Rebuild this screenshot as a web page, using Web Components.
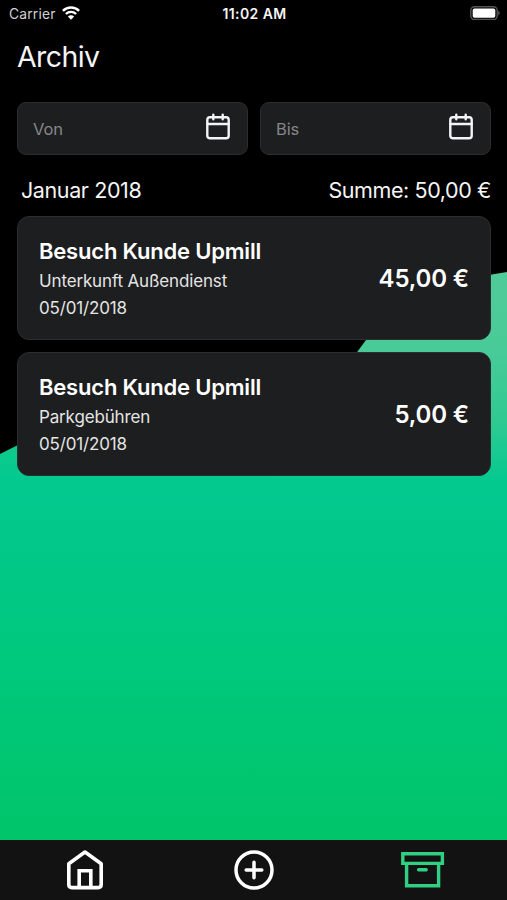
<!DOCTYPE html>
<html lang="de">
<head>
<meta charset="utf-8">
<title>Archiv</title>
<style>
    html, body { margin: 0; height: 100%; background: #000; }
    body { font-family: Inter, "Liberation Sans", sans-serif; color: #f5f5f5; overflow: hidden; }
</style>
</head>
<body>

<archive-app>
    <status-bar slot="status" carrier="Carrier" time="11:02 AM"></status-bar>
    <span slot="title">Archiv</span>
    <date-field slot="filter">Von</date-field>
    <date-field slot="filter">Bis</date-field>
    <month-group month="Januar 2018" total="Summe: 50,00 €">
        <expense-card amount="45,00 €">
            Besuch Kunde Upmill
            <span slot="kind">Unterkunft Außendienst</span>
            <span slot="date">05/01/2018</span>
        </expense-card>
        <expense-card amount="5,00 €">
            Besuch Kunde Upmill
            <span slot="kind">Parkgebühren</span>
            <span slot="date">05/01/2018</span>
        </expense-card>
    </month-group>
    <tab-bar slot="tabs"></tab-bar>
</archive-app>

<script>
/** Create an open shadow root on the element and fill it from an HTML string */
function attach(el, html) {
    const template = document.createElement('template')
    template.innerHTML = html
    el.attachShadow({ mode: 'open' }).append(template.content.cloneNode(true))
}

class ArchiveApp extends HTMLElement {
    constructor() {
        super()
        attach(this, `
            <style>
                :host { display: flex; flex-direction: column; height: 100vh; position: relative; isolation: isolate; }
                .backdrop { position: absolute; inset: 0; width: 100%; height: 100%; z-index: -1; }
                h1 { margin: 0; padding: 10px 17px 0; font-size: 28.5px; line-height: 40px; font-weight: 400; letter-spacing: -0.6px; }
                .filters { display: grid; grid-template-columns: 1fr 1fr; gap: 12px; padding: 25px 16px 0 17px; }
                main { flex: 1; padding: 0 16px 0 17px; }
            </style>
            <svg class="backdrop" viewBox="0 0 507 900" preserveAspectRatio="none" aria-hidden="true">
                <defs>
                    <linearGradient id="fill" gradientUnits="userSpaceOnUse" x1="0" y1="272" x2="0" y2="840">
                        <stop offset="0" stop-color="#50cb99"/>
                        <stop offset=".14" stop-color="#48cb98"/>
                        <stop offset=".26" stop-color="#30ca92"/>
                        <stop offset=".37" stop-color="#03c98f"/>
                        <stop offset=".68" stop-color="#00c87d"/>
                        <stop offset="1" stop-color="#00c569"/>
                    </linearGradient>
                    <linearGradient id="low" gradientUnits="userSpaceOnUse" x1="0" y1="272" x2="0" y2="840">
                        <stop offset=".3" stop-color="#10ca8b"/>
                        <stop offset=".37" stop-color="#03c98f"/>
                        <stop offset=".68" stop-color="#00c87d"/>
                        <stop offset="1" stop-color="#00c569"/>
                    </linearGradient>
                </defs>
                <path fill="url(#fill)" d="M270 470 L366 340 Q405 287 507 272 V900 H270Z"/>
                <path fill="url(#low)" d="M0 454 L17 445.5 L40 436 V476 H271 V900 H0Z"/>
            </svg>
            <slot name="status"></slot>
            <h1><slot name="title"></slot></h1>
            <div class="filters"><slot name="filter"></slot></div>
            <main><slot></slot></main>
            <slot name="tabs"></slot>
        `)
    }
}
customElements.define('archive-app', ArchiveApp)

class StatusBar extends HTMLElement {
    constructor() {
        super()
        attach(this, `
            <style>
                :host { display: grid; grid-template-columns: 1fr auto 1fr; align-items: center; height: 27px; padding: 0 7px 0 9px; }
                .left { display: flex; align-items: center; gap: 6px; color: #d0d0d0; }
                .carrier { font-size: 13.8px; letter-spacing: .2px; }
                .time { font-weight: 600; font-size: 14px; letter-spacing: .4px; font-kerning: none; }
                .battery { justify-self: end; }
                svg { display: block; margin-bottom: 1px; }
            </style>
            <div class="left">
                <span class="carrier"></span>
                <svg width="18" height="14" viewBox="0 0 18 14" fill="none" stroke="#fff" stroke-width="2.4">
                    <path d="M.9 4.9a11.5 11.5 0 0 1 16.2 0"/>
                    <path d="M3.9 8a7.2 7.2 0 0 1 10.2 0"/>
                    <path fill="#fff" stroke="none" d="M5.9 10.5a4.4 4.4 0 0 1 6.2 0L9 13.7z"/>
                </svg>
            </div>
            <span class="time"></span>
            <svg class="battery" width="30" height="14" viewBox="0 0 30 14">
                <rect x=".8" y=".7" width="26.4" height="12.8" rx="3.8" fill="none" stroke="#555" stroke-width="1.4"/>
                <rect x="2.7" y="2.5" width="22.6" height="9.2" rx="1.8" fill="#fff"/>
                <path d="M28.2 4.8v4.6q1.6-.7 1.6-2.3t-1.6-2.3z" fill="#555"/>
            </svg>
        `)
    }

    connectedCallback() {
        this.shadowRoot.querySelector('.carrier').textContent = this.getAttribute('carrier')
        this.shadowRoot.querySelector('.time').textContent = this.getAttribute('time')
    }
}
customElements.define('status-bar', StatusBar)

// Date input look-alike, the slotted text is the placeholder
class DateField extends HTMLElement {
    constructor() {
        super()
        attach(this, `
            <style>
                :host { display: flex; align-items: center; justify-content: space-between; box-sizing: border-box; height: 53px;
                    padding: 0 15px; border: 1px solid #2c2d2e; border-radius: 9px; background: #1d1e20; color: #85868a; font-size: 16.5px; letter-spacing: -.1px; }
                svg { display: block; margin-bottom: 4px; }
            </style>
            <slot></slot>
            <svg width="28" height="28" viewBox="0 0 28 28" fill="none" stroke="#f2f4f8" stroke-width="2.4" stroke-linecap="round" stroke-linejoin="round">
                <rect x="3.3" y="4.3" width="21.4" height="21" rx="2.6"/>
                <path d="M3.3 11h21.4M9.3 1.7v4.5M18.7 1.7v4.5"/>
            </svg>
        `)
    }
}
customElements.define('date-field', DateField)

class MonthGroup extends HTMLElement {
    constructor() {
        super()
        attach(this, `
            <style>
                :host { display: block; }
                header { display: flex; justify-content: space-between; align-items: center; height: 61px; box-sizing: border-box;
                    padding: 9px 0 0 4px; font-size: 21.5px; letter-spacing: -.4px; }
                .cards { display: grid; gap: 12px; }
            </style>
            <header><span class="month"></span><span class="total"></span></header>
            <div class="cards"><slot></slot></div>
        `)
    }

    connectedCallback() {
        this.shadowRoot.querySelector('.month').textContent = this.getAttribute('month')
        this.shadowRoot.querySelector('.total').textContent = this.getAttribute('total')
    }
}
customElements.define('month-group', MonthGroup)

class ExpenseCard extends HTMLElement {
    constructor() {
        super()
        attach(this, `
            <style>
                :host { display: flex; align-items: center; justify-content: space-between; box-sizing: border-box; height: 124px;
                    padding: 0 21px; border: 1px solid #2c2d2e; border-radius: 12px; background: #1d1e20; }
                .title { font-size: 22px; line-height: 32px; font-weight: 600; color: #fff; letter-spacing: -.2px; margin-bottom: 1px; }
                .line { font-size: 17px; line-height: 27px; color: #e4e4e4; letter-spacing: -.15px; }
                .text { padding-top: 1px; }
                .amount { font-size: 24px; font-weight: 600; color: #fff; letter-spacing: -.15px; }
            </style>
            <div class="text">
                <div class="title"><slot></slot></div>
                <div class="line"><slot name="kind"></slot></div>
                <div class="line"><slot name="date"></slot></div>
            </div>
            <span class="amount"></span>
        `)
    }

    connectedCallback() {
        this.shadowRoot.querySelector('.amount').textContent = this.getAttribute('amount')
    }
}
customElements.define('expense-card', ExpenseCard)

// Bottom navigation: home, add, archive (active)
class TabBar extends HTMLElement {
    constructor() {
        super()
        attach(this, `
            <style>
                :host { display: grid; grid-template-columns: repeat(3, 1fr); place-items: center; height: 60px; background: #121212; color: #fff; }
                svg { display: block; }
                .active { color: #2fd082; }
            </style>
            <svg width="44" height="44" viewBox="0 0 44 44" fill="none" stroke="currentColor" stroke-width="3.6" stroke-linejoin="round">
                <path d="M22 4 5.8 15.8v20.8q0 3 3 3h26.4q3 0 3-3V15.8z"/>
                <path d="M16.2 39V22.8h11.6V39" stroke-linejoin="miter"/>
            </svg>
            <svg width="44" height="44" viewBox="0 0 44 44" fill="none" stroke="currentColor" stroke-width="3.5" stroke-linecap="round">
                <circle cx="22" cy="22" r="18"/>
                <path d="M14.2 22h15.6M22 14.2v15.6"/>
            </svg>
            <svg class="active" width="44" height="44" viewBox="0 0 44 44" fill="none" stroke="currentColor" stroke-width="3.4" stroke-linecap="round" stroke-linejoin="miter">
                <path d="M1.8 5.8h39.6v9.6H1.8zM5.6 15.4h32v22.4h-32zM17.6 21.8h7.6"/>
            </svg>
        `)
    }
}
customElements.define('tab-bar', TabBar)
</script>
</body>
</html>
